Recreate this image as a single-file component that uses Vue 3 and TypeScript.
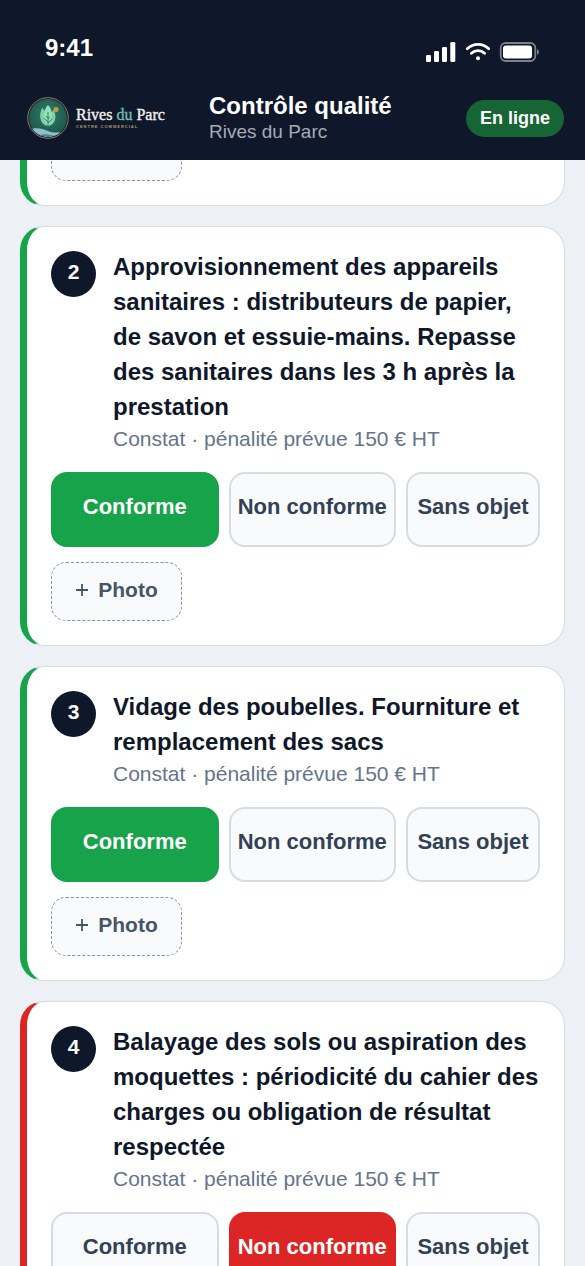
<script setup lang="ts">
import { reactive } from 'vue'

type Answer = 'ok' | 'ko' | 'na'

interface Check {
  id: number
  title?: string
  answer: Answer
}

const options: { value: Answer; label: string }[] = [
  { value: 'ok', label: 'Conforme' },
  { value: 'ko', label: 'Non conforme' },
  { value: 'na', label: 'Sans objet' },
]

const checks = reactive<Check[]>([
  { id: 1, answer: 'ok' },
  {
    id: 2,
    title:
      'Approvisionnement des appareils sanitaires : distributeurs de papier, de savon et essuie-mains. Repasse des sanitaires dans les 3 h après la prestation',
    answer: 'ok',
  },
  { id: 3, title: 'Vidage des poubelles. Fourniture et remplacement des sacs', answer: 'ok' },
  {
    id: 4,
    title:
      'Balayage des sols ou aspiration des moquettes : périodicité du cahier des charges ou obligation de résultat respectée',
    answer: 'ko',
  },
])
</script>

<template>
  <div class="app">
    <header class="top">
      <div class="status">
        <span class="clock">9:41</span>
        <svg class="status-icons" width="114" height="22" viewBox="0 0 114 22" aria-hidden="true">
          <g fill="#fff">
            <rect x="0" y="14" width="5" height="7" rx="1.3" />
            <rect x="8" y="10" width="5" height="11" rx="1.3" />
            <rect x="16" y="6" width="5" height="15" rx="1.3" />
            <rect x="24.300" y="1" width="5" height="20" rx="1.3" />
            <circle cx="52" cy="17.300" r="2" />
          </g>
          <g fill="none" stroke="#fff" stroke-width="2.800" stroke-linecap="round">
            <path d="M41.300 7.800c6-6 15.400-6 21.400 0" />
            <path d="M45.400 12.300c3.800-3.600 9.400-3.600 13.200 0" />
          </g>
          <rect x="74.700" y="2" width="34.600" height="18" rx="5" fill="none" stroke="#7c818c" stroke-width="1.800" />
          <rect x="77" y="4.500" width="29" height="13" rx="3" fill="#fff" />
          <path d="M111 8.200c2.700 1 2.700 4.600 0 5.600z" fill="#7c818c" />
        </svg>
      </div>
      <div class="bar">
        <div class="brand">
          <svg width="42" height="42" viewBox="0 0 42 42" aria-hidden="true">
            <defs>
              <radialGradient id="disc" cx="0.5" cy="0.4" r="0.6">
                <stop offset="0" stop-color="#327d67" />
                <stop offset="1" stop-color="#1c5449" />
              </radialGradient>
              <clipPath id="round"><circle cx="21" cy="21" r="19" /></clipPath>
            </defs>
            <circle cx="21" cy="21" r="20.300" fill="#0f172a" stroke="#8f8060" stroke-width="1" />
            <circle cx="21" cy="21" r="19" fill="url(#disc)" />
            <g fill="#7ed0a5">
              <path d="M20 29C12 26 12 18 15 11c3 2 5 6 6 18z" />
              <path d="M22 29c8-3 7-11 5-16-4 3-6 8-6 16z" />
              <path d="M21 29C15 22 16 13 21 8c5 5 6 14 0 21z" fill="#96dfb5" />
            </g>
            <path d="M21 15v16M21 21l-2-2M21 25l-4-4M21 22l2-2M21 26l4-4" fill="none" stroke="#286b52" stroke-width="0.800" />
            <circle cx="29" cy="12.500" r="2.500" fill="#c8994b" />
            <g clip-path="url(#round)">
              <path d="M0 33.500c9-4 15-2 21 0.500s12 2 21-1v10H0z" fill="#8fbfd0" />
              <path d="M9 41c4-5 10-4 15-3s9 1 15-3v8H9z" fill="#4c8691" />
            </g>
          </svg>
          <div class="brand-text">
            <span class="brand-name">Rives <em>du</em> Parc</span>
            <span class="brand-sub">CENTRE COMMERCIAL</span>
          </div>
        </div>
        <div class="heading">
          <h1>Contrôle qualité</h1>
          <p>Rives du Parc</p>
        </div>
        <span class="online">En ligne</span>
      </div>
    </header>

    <main class="list">
      <article v-for="c in checks" :key="c.id" class="card" :class="c.answer">
        <template v-if="c.title">
          <div class="question">
            <span class="num">{{ c.id }}</span>
            <div>
              <h2>{{ c.title }}</h2>
              <p>Constat · pénalité prévue 150 € HT</p>
            </div>
          </div>
          <div class="answers">
            <button
              v-for="o in options"
              :key="o.value"
              type="button"
              :class="[o.value, { on: c.answer === o.value }]"
              :aria-pressed="c.answer === o.value"
              @click="c.answer = o.value"
            >
              {{ o.label }}
            </button>
          </div>
        </template>
        <button type="button" class="photo">
          <svg width="14" height="14" viewBox="0 0 14 14" aria-hidden="true">
            <path d="M7 1v12M1 7h12" stroke="#475569" stroke-width="1.800" />
          </svg>
          Photo
        </button>
      </article>
    </main>
  </div>
</template>

<style>
body {
  margin: 0;
  background: #edf1f5;
}
</style>

<style scoped>
.app {
  height: 100vh;
  display: flex;
  flex-direction: column;
  overflow: hidden;
  font-family: 'Liberation Sans', Arial, sans-serif;
  color: #0f172a;
}
h1,
h2,
p {
  margin: 0;
}
.top {
  flex: none;
  position: relative;
  z-index: 1;
  background: #0f172a;
  color: #fff;
}
.status {
  display: flex;
  align-items: center;
  justify-content: space-between;
  padding: 32px 45px 12px;
}
.clock {
  font-size: 24px;
  line-height: 32px;
  font-weight: 700;
}
.status-icons {
  margin-top: 8px;
}
.bar {
  display: flex;
  align-items: center;
  padding: 16px 21px 16px 27px;
}
.brand {
  display: flex;
  align-items: center;
  gap: 7px;
  width: 182px;
}
.brand-text {
  display: flex;
  flex-direction: column;
  white-space: nowrap;
}
.brand-name {
  font-family: 'Liberation Serif', 'Times New Roman', serif;
  font-size: 16px;
  line-height: 18px;
  color: #f3f0e6;
  -webkit-text-stroke: 0.4px currentColor;
}
.brand-name em {
  font-style: normal;
  color: #6dbfae;
}
.brand-sub {
  font-size: 4px;
  line-height: 6px;
  font-weight: 700;
  letter-spacing: 1px;
  color: #b49a62;
}
.heading {
  flex: 1;
}
.heading h1 {
  font-size: 24px;
  line-height: 28px;
}
.heading p {
  font-size: 19px;
  line-height: 24px;
  color: #a6abb6;
}
.online {
  padding: 8px 14px;
  border-radius: 20px;
  background: #166534;
  font-size: 18px;
  line-height: 21px;
  font-weight: 700;
}
.list {
  display: flex;
  flex-direction: column;
  gap: 20px;
  margin-top: -61px;
  padding: 0 20px;
}
.card {
  flex: none;
  border: 1px solid #d5dce6;
  border-left: 7px solid #16a34a;
  border-radius: 24px;
  background: #fff;
  padding: 22px 24px 24px;
}
.card.ko {
  border-left-color: #dc2626;
}
.question {
  display: flex;
  gap: 17px;
}
.num {
  flex: none;
  box-sizing: border-box;
  width: 45px;
  height: 46px;
  margin-top: 2px;
  padding-bottom: 4px;
  border-radius: 50%;
  background: #0f172a;
  color: #fff;
  font-size: 21px;
  line-height: 42px;
  font-weight: 700;
  text-align: center;
}
.question h2 {
  font-size: 24px;
  line-height: 35px;
}
.question p {
  font-size: 21px;
  line-height: 29px;
  color: #64748b;
}
.answers {
  display: grid;
  grid-template-columns: 5fr 5fr 4fr;
  gap: 10px;
  margin: 19px 0 15px;
}
button {
  box-sizing: border-box;
  font-family: inherit;
  font-weight: 700;
  background: #f8fafc;
  white-space: nowrap;
}
.answers button {
  min-width: 0;
  height: 75px;
  padding: 0 0 5px;
  border: 2px solid #d5dce6;
  border-radius: 16px;
  font-size: 22px;
  color: #334155;
}
.answers .on {
  color: #fff;
}
.answers .ok.on {
  background: #16a34a;
  border-color: #16a34a;
}
.answers .ko.on {
  background: #dc2626;
  border-color: #dc2626;
}
.photo {
  display: flex;
  align-items: center;
  justify-content: center;
  gap: 9px;
  width: 131px;
  height: 59px;
  padding: 0 0 3px;
  border: 1px dashed #8592a8;
  border-radius: 15px;
  font-size: 21px;
  color: #475569;
}
</style>
